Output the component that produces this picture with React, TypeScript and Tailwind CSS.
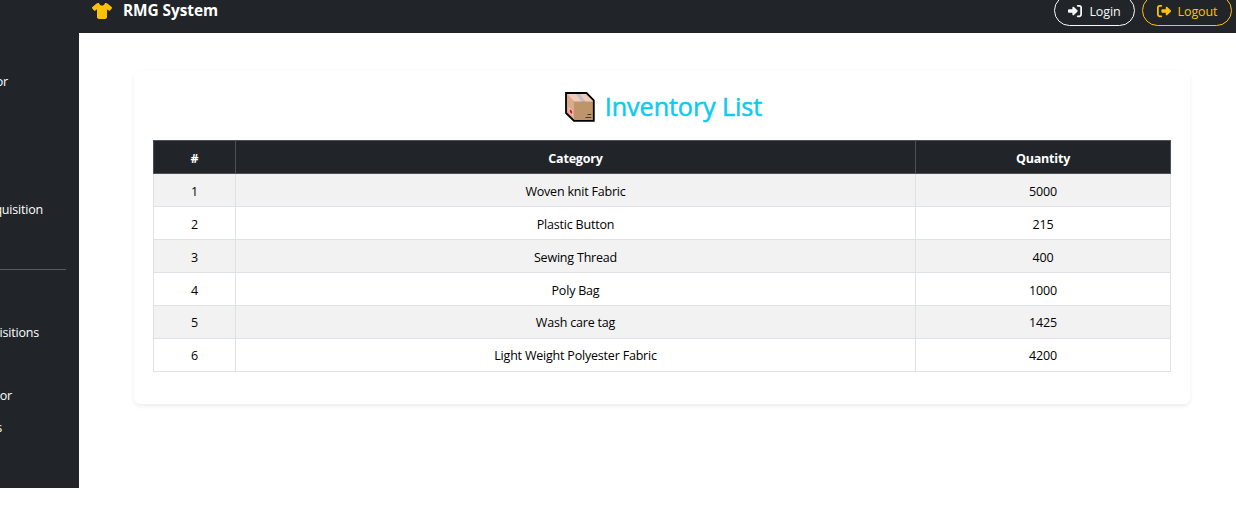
import React from "react";
import { FaShirt, FaRightToBracket, FaRightFromBracket } from "react-icons/fa6";

const rows = [
  { name: "Woven knit Fabric", qty: 5000, pad: "pt-1" },
  { name: "Plastic Button", qty: 215, pad: "pt-1" },
  { name: "Sewing Thread", qty: 400, pad: "pt-1" },
  { name: "Poly Bag", qty: 1000, pad: "pt-1" },
  { name: "Wash care tag", qty: 1425, pad: "pt-[2px]" },
  { name: "Light Weight Polyester Fabric", qty: 4200, pad: "pt-[2px]" },
];

function BoxIcon() {
  return (
    <svg width="30" height="30" viewBox="0 0 30 30" className="shrink-0">
      <path d="M1 1H21.5L28.8 8.3V28.8H9L1 21Z" fill="#be946a" />
      <path d="M1 1H21.5L28.8 9.5H9Z" fill="#f1cbb8" />
      <path d="M1 1L9 9.5V28.8L1 21Z" fill="#d9ab8c" />
      <path d="M10.5 1.5H14.5L20.5 9.5H16.5Z" fill="#bfc0c4" />
      <path d="M16.5 9.5H20.5V11.5H16.5Z" fill="#a9998b" />
      <path d="M3.7 15.5L8 18.8V23.8L3.7 20Z" fill="#f7d5d5" />
      <path d="M4.7 17L7.3 19V22.3L4.7 20.2Z" fill="#e8112d" />
      <path d="M22.5 22.5H26.2M20.5 25.5H26.2" stroke="#4a3a2c" strokeWidth="1" />
      <path d="M1 1H21.5L28.8 8.3V28.8H9L1 21Z" fill="none" stroke="#000" strokeWidth="1.8" />
    </svg>
  );
}

function SideItem({ text, className }: { text: string; className: string }) {
  return <div className={`flex h-5 justify-end leading-5 whitespace-nowrap ${className}`}>{text}</div>;
}

export default function App() {
  return (
    <div className="h-[511px] w-[1236px] overflow-hidden bg-white font-['Open_Sans','Noto_Sans',sans-serif] text-[12.5px] tracking-[-0.2px] text-black">
      <header className="flex h-[33px] items-start justify-between bg-[#212529] pr-1 pl-[92px] text-white">
        <div className="flex h-[21px] items-center">
          <FaShirt className="h-4 w-5 text-[#ffc107]" />
          <span className="ml-[11px] pt-px text-[15.4px] font-bold tracking-[-0.05px]">RMG System</span>
        </div>
        <div className="-mt-[5px] flex gap-[7px]">
          <button className="flex h-[31px] w-[81px] items-center justify-center rounded-full border border-[#f8f9fa] pt-px text-[#f8f9fa]">
            <FaRightToBracket className="mr-[7px] h-[14px] w-[14px]" />
            <span className="pt-[2px] tracking-[-0.1px]">Login</span>
          </button>
          <button className="flex h-[31px] w-[90px] items-center justify-center rounded-full border border-[#ffc107] pt-px text-[#ffc107]">
            <FaRightFromBracket className="mr-[7px] h-[14px] w-[14px]" />
            <span className="pt-[2px] tracking-[-0.1px]">Logout</span>
          </button>
        </div>
      </header>
      <div className="flex">
        <aside className="h-[455px] w-[79px] overflow-hidden bg-[#212529] pt-[39px] text-white">
          <SideItem text="or" className="w-[8px]" />
          <SideItem text="quisition" className="mt-[108px] w-[43px]" />
          <hr className="mt-[49px] w-[66px] border-[#585b5e]" />
          <SideItem text="isitions" className="mt-[53px] w-[39px]" />
          <SideItem text="or" className="mt-[43px] w-[12px]" />
          <SideItem text="s" className="mt-3 w-[2px]" />
        </aside>
        <main className="flex-1 pt-[38px] pl-[55px]">
          <section className="h-[333px] w-[1056px] rounded-md bg-white px-[19px] pt-[21px] shadow-[0_2px_4px_rgba(0,0,0,0.075)]">
            <h1 className="flex h-[30px] items-center justify-center gap-[10px] pl-[3px] text-[25.2px] font-medium tracking-[-0.1px] text-[#0dcaf0]">
              <BoxIcon />
              <span className="whitespace-nowrap [-webkit-text-stroke:0.5px_#0dcaf0]">Inventory List</span>
            </h1>
            <table className="mt-[18px] w-[1018px] table-fixed border-collapse text-center">
              <colgroup>
                <col className="w-[82px]" />
                <col className="w-[680px]" />
                <col className="w-[255px]" />
              </colgroup>
              <thead className="bg-[#212529] font-bold text-white">
                <tr className="h-[33px]">
                  <th className="border border-[#4d5154] p-0 pt-1">#</th>
                  <th className="border border-[#4d5154] p-0 pt-1">Category</th>
                  <th className="border border-[#4d5154] p-0 pt-1">Quantity</th>
                </tr>
              </thead>
              <tbody>
                {rows.map((row, i) => (
                  <tr key={row.name} className="h-[33px] odd:bg-[#f2f2f2]">
                    <td className={`border border-[#dee2e6] p-0 ${row.pad}`}>{i + 1}</td>
                    <td className={`border border-[#dee2e6] p-0 ${row.pad}`}>{row.name}</td>
                    <td className={`border border-[#dee2e6] p-0 ${row.pad}`}>{row.qty}</td>
                  </tr>
                ))}
              </tbody>
            </table>
          </section>
        </main>
      </div>
    </div>
  );
}
